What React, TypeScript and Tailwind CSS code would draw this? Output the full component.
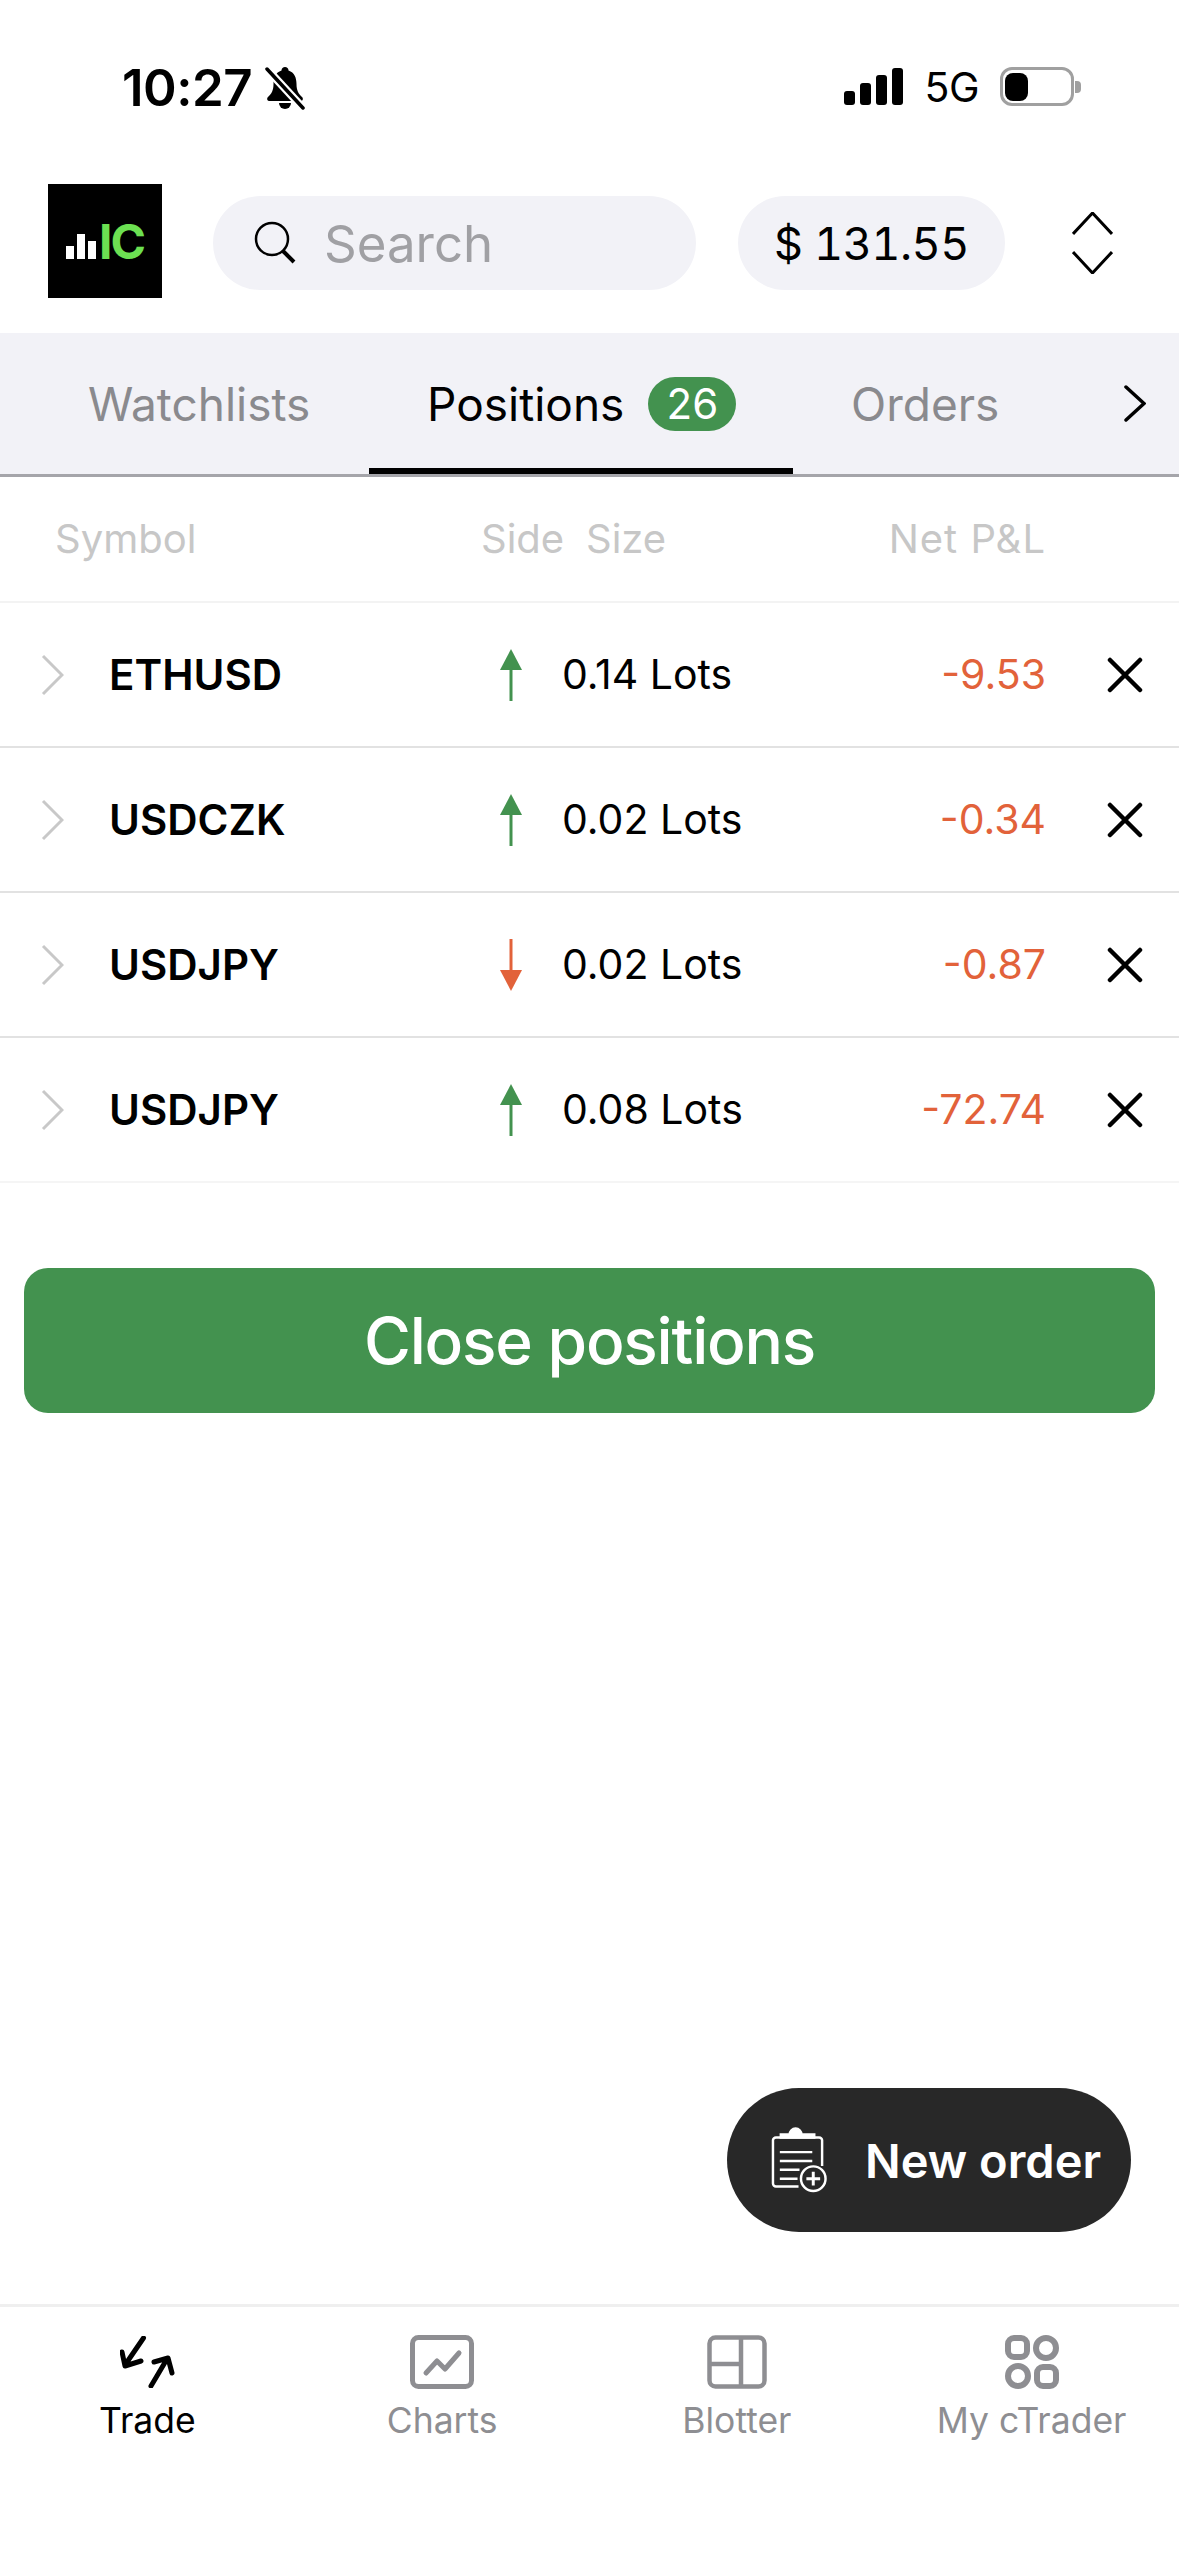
const font = "font-['Inter','Liberation_Sans',sans-serif]";

const rows = [
  { symbol: "ETHUSD", up: true, size: "0.14 Lots", pnl: "-9.53" },
  { symbol: "USDCZK", up: true, size: "0.02 Lots", pnl: "-0.34" },
  { symbol: "USDJPY", up: false, size: "0.02 Lots", pnl: "-0.87" },
  { symbol: "USDJPY", up: true, size: "0.08 Lots", pnl: "-72.74" },
];

function StatusBar() {
  return (
    <div className="flex h-[184px] items-start justify-between pt-[63px] pr-[98px] pl-[122px]">
      <div className="flex items-center gap-[13px]">
        <span className="text-[51px] leading-[50px] font-semibold tracking-[-0.5px] text-black">10:27</span>
        <svg width="40" height="44" viewBox="0 0 40 44" fill="black">
          <path d="M20 1c-2 0-3.500 1.500-3.500 3.500C10.500 6.500 8.500 12 8.500 18c0 6-2 10-5.500 13-1.500 1.500-1 4 1.500 4h31c2.500 0 3-2.500 1.500-4-3.500-3-5.500-7-5.500-13 0-6-2-11.500-8-13.500C23.500 2.500 22 1 20 1z" />
          <path d="M14 37a6 6 0 0 0 12 0z" />
          <path d="M2 3l36 39" stroke="white" strokeWidth="8" />
          <path d="M2 3l36 39" stroke="black" strokeWidth="3.500" strokeLinecap="round" />
        </svg>
      </div>
      <div className="flex items-center gap-[21px] pt-[4px]">
        <div className="flex h-[37px] items-end gap-[5px]">
          <div className="h-[14px] w-[11px] rounded-[3px] bg-black" />
          <div className="h-[22px] w-[11px] rounded-[3px] bg-black" />
          <div className="h-[30px] w-[11px] rounded-[3px] bg-black" />
          <div className="h-[37px] w-[11px] rounded-[3px] bg-black" />
        </div>
        <span className="text-[41px] leading-[38px] tracking-[-0.5px] text-black">5G</span>
        <div className="flex items-center gap-[1px]">
          <div className="flex h-[39px] w-[74px] items-center rounded-[12px] border-[3px] border-[#a0a0a0] px-[2px]">
            <div className="h-[28px] w-[23px] rounded-[8px] bg-black" />
          </div>
          <div className="h-[12px] w-[6px] rounded-r-[4px] bg-[#a0a0a0]" />
        </div>
      </div>
    </div>
  );
}

function Logo() {
  return (
    <div className="flex h-[114px] w-[114px] shrink-0 items-center justify-center bg-black">
      <div className="flex items-end">
        <div className="flex items-end gap-[3px]">
          <div className="h-[13px] w-[8px] bg-white" />
          <div className="h-[25px] w-[8px] bg-white" />
          <div className="h-[18px] w-[8px] bg-white" />
        </div>
        <span className="ml-[3px] text-[48px] leading-[35px] font-bold tracking-[-2px] text-[#6ce052]">IC</span>
      </div>
    </div>
  );
}

function TopBar() {
  return (
    <div className="flex h-[149px] items-start pl-[48px]">
      <Logo />
      <div className="mt-[12px] ml-[51px] flex h-[94px] w-[483px] items-center rounded-[47px] bg-[#f2f2f7] pl-[40px]">
        <svg width="44" height="44" viewBox="0 0 44 44" fill="none" stroke="black">
          <circle cx="19" cy="18" r="16" strokeWidth="2.500" />
          <path d="M30 30l11 11" strokeWidth="4" />
        </svg>
        <span className="ml-[27px] text-[51px] leading-none text-[#a0a0a4]">Search</span>
      </div>
      <div className="mt-[12px] ml-[42px] flex h-[94px] w-[267px] items-center justify-center rounded-[47px] bg-[#f2f2f7] text-[45px] leading-none tracking-[-0.5px] text-black tabular-nums">
        $ 131.55
      </div>
      <svg className="mt-[28px] ml-[67px]" width="41" height="62" viewBox="0 0 41 62" fill="none" stroke="black" strokeWidth="3">
        <path d="M1 22L20.500 1 40 22" />
        <path d="M1 40l19.500 21L40 40" />
      </svg>
    </div>
  );
}

function Tabs() {
  return (
    <div className="flex h-[144px] items-stretch border-b-[3px] border-[#a5a5aa] bg-[#f2f2f7]">
      <div className="flex w-[369px] items-center pl-[88px] text-[46px] leading-none text-[#8a8a8e]">Watchlists</div>
      <div className="flex w-[424px] items-center gap-[24px] border-b-[6px] border-black pt-[6px] pl-[58px] text-[46px] leading-none text-black">
        Positions
        <span className="flex h-[54px] w-[88px] items-center justify-center rounded-[27px] bg-[#43924f] text-[42px] leading-none text-white">
          26
        </span>
      </div>
      <div className="flex w-[331px] items-center pl-[58px] text-[46px] leading-none text-[#8a8a8e]">Orders</div>
      <div className="flex items-center">
        <svg width="22" height="37" viewBox="0 0 22 37" fill="none" stroke="black" strokeWidth="3.500" strokeLinecap="round">
          <path d="M2 2l18 16.500L2 35" />
        </svg>
      </div>
    </div>
  );
}

function Arrow({ up }: { up: boolean }) {
  return (
    <svg width="22" height="52" viewBox="0 0 22 52" fill={up ? "#43924f" : "#e2623a"} stroke={up ? "#43924f" : "#e2623a"}>
      {up ? (
        <>
          <path d="M11 0L22 21H0z" stroke="none" />
          <path d="M11 16v36" strokeWidth="3" />
        </>
      ) : (
        <>
          <path d="M11 52L22 31H0z" stroke="none" />
          <path d="M11 0v36" strokeWidth="3" />
        </>
      )}
    </svg>
  );
}

function PositionRow({ row, last }: { row: (typeof rows)[number]; last: boolean }) {
  return (
    <div className={`flex h-[145px] items-center border-b-[2px] ${last ? "border-[#f5f5f5]" : "border-[#e2e2e2]"}`}>
      <svg className="ml-[41px] shrink-0" width="23" height="42" viewBox="0 0 23 42" fill="none" stroke="#c8c8c8" strokeWidth="3">
        <path d="M2 2l19 19L2 40" />
      </svg>
      <span className="ml-[45px] w-[391px] shrink-0 text-[42px] leading-none font-semibold text-black">{row.symbol}</span>
      <Arrow up={row.up} />
      <span className="ml-[40px] w-[260px] shrink-0 text-[41px] leading-none text-black">{row.size}</span>
      <span className="w-[224px] shrink-0 text-right text-[41px] leading-none text-[#e2623a]">{row.pnl}</span>
      <svg className="ml-[61px] shrink-0" width="36" height="36" viewBox="0 0 36 36" fill="none" stroke="black" strokeWidth="4.500" strokeLinecap="round">
        <path d="M3 3l30 30M33 3L3 33" />
      </svg>
    </div>
  );
}

function NavIcon({ name }: { name: string }) {
  if (name === "Trade") {
    return (
      <svg width="55" height="52" viewBox="0 0 55 52" fill="none" stroke="black" strokeWidth="5" strokeLinecap="round" strokeLinejoin="round">
        <path d="M23.500 2L5 29M2 16l3 14 16-5" />
        <path d="M31 50l16-27M34 26l14-4 4 15" />
      </svg>
    );
  }
  if (name === "Charts") {
    return (
      <svg width="64" height="54" viewBox="0 0 64 54" fill="none" stroke="#8e8e92" strokeWidth="5" strokeLinecap="round" strokeLinejoin="round">
        <rect x="2.500" y="2.500" width="59" height="49" rx="6" />
        <path d="M16 38l11-12 8 8 14-16" />
      </svg>
    );
  }
  if (name === "Blotter") {
    return (
      <svg width="60" height="54" viewBox="0 0 60 54" fill="none" stroke="#8e8e92" strokeWidth="4.500">
        <rect x="2.500" y="2.500" width="55" height="49" rx="6" />
        <path d="M34 2v50M2 29h32" />
      </svg>
    );
  }
  return (
    <svg width="54" height="54" viewBox="0 0 54 54" fill="none" stroke="#8e8e92" strokeWidth="6">
      <rect x="3" y="3" width="19" height="19" rx="6" />
      <circle cx="41" cy="13" r="10" />
      <circle cx="13" cy="41" r="10" />
      <rect x="32" y="32" width="19" height="19" rx="6" />
    </svg>
  );
}

export default function App() {
  return (
    <div className={`${font} flex h-[2556px] w-[1179px] flex-col overflow-hidden bg-white`}>
      <StatusBar />
      <TopBar />
      <Tabs />
      <div className="flex h-[126px] items-center border-b-[2px] border-[#f3f3f3] pl-[55px] text-[40px] leading-none text-[#c7c7c7]">
        <span className="w-[426px]">Symbol</span>
        <span className="w-[105px]">Side</span>
        <span className="w-[200px]">Size</span>
        <span className="w-[260px] text-right tracking-[1px]">Net P&amp;L</span>
      </div>
      {rows.map((row, i) => (
        <PositionRow key={i} row={row} last={i === rows.length - 1} />
      ))}
      <button className="mx-[24px] mt-[85px] flex h-[145px] w-[1131px] shrink-0 items-center justify-center rounded-[24px] bg-[#43924f] text-[64px] leading-none font-medium tracking-[-1.2px] text-white">
        Close positions
      </button>
      <div className="flex flex-1 items-end justify-end pr-[48px] pb-[72px]">
        <div className="flex h-[144px] w-[404px] items-center rounded-[72px] bg-[#282828] pl-[44px]">
          <svg width="57" height="66" viewBox="0 0 58 66" fill="none" stroke="white" strokeWidth="2.500">
            <path d="M28 60H5a3 3 0 0 1-3-3V13a3 3 0 0 1 3-3h44a3 3 0 0 1 3 3v26" />
            <path d="M10 10V7h9a6 6 0 0 1 12 0h13v3z" fill="white" />
            <path d="M9 25h33M9 34h33M9 43h20M9 52h18" />
            <circle cx="43" cy="52" r="12.500" />
            <path d="M36 52h14M43 45v14" strokeWidth="3" />
          </svg>
          <span className="ml-[37px] text-[47px] leading-none font-semibold text-white">New order</span>
        </div>
      </div>
      <div className="grid h-[252px] shrink-0 grid-cols-4 border-t-[3px] border-[#efefef] pt-[25px]">
        {["Trade", "Charts", "Blotter", "My cTrader"].map((name) => (
          <div key={name} className="flex flex-col items-center">
            <div className="flex h-[60px] items-center">
              <NavIcon name={name} />
            </div>
            <span className={`mt-[7px] text-[35.500px] leading-[44px] ${name === "Trade" ? "text-black" : "text-[#8e8e92]"}`}>{name}</span>
          </div>
        ))}
      </div>
    </div>
  );
}
